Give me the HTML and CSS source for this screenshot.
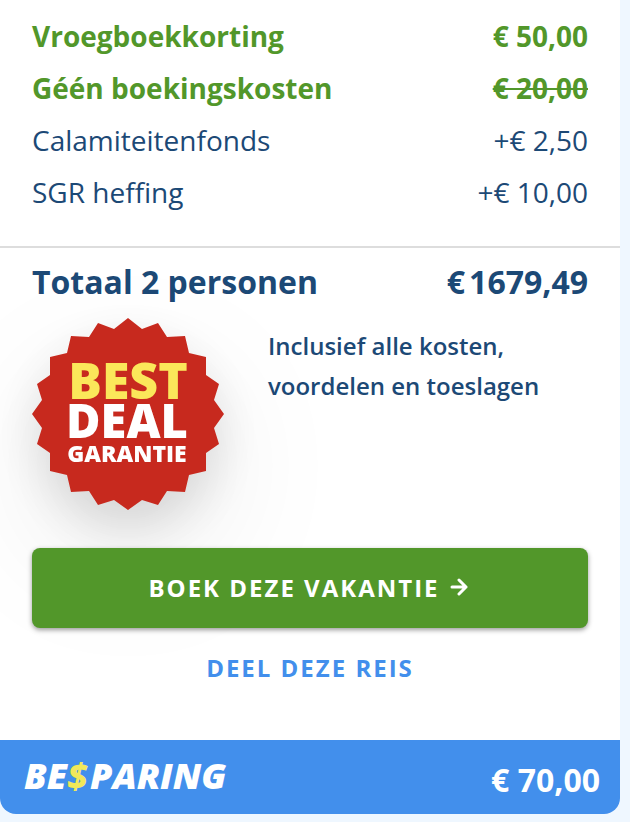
FILE: index.html
```html
<!DOCTYPE html>
<html lang="nl">
<head>
    <meta charset="UTF-8">
    <meta name="viewport" content="width=device-width, initial-scale=1.0">
    <title>Prijsoverzicht</title>
    <link rel="stylesheet" href="styles.css">
</head>
<body>
    <div class="card">
        <table class="costs">
            <tr class="discount">
                <th scope="row">Vroegboekkorting</th>
                <td>€ 50,00</td>
            </tr>
            <tr class="discount">
                <th scope="row">Géén boekingskosten</th>
                <td><s>€ 20,00</s></td>
            </tr>
            <tr>
                <th scope="row">Calamiteitenfonds</th>
                <td>+€ 2,50</td>
            </tr>
            <tr>
                <th scope="row">SGR heffing</th>
                <td>+€ 10,00</td>
            </tr>
        </table>

        <div class="summary">
            <div class="total">
                <span>Totaal 2 personen</span>
                <span class="total-price"><span>€</span><span>1679,49</span></span>
            </div>

            <div class="guarantee">
                <svg class="badge" viewBox="0 0 192 192" role="img" aria-label="Best deal garantie">
                    <polygon fill="#c7291e" points="96,0 110,11 126,5 135,19 153,18 157,35 174,39 174,57 187,66 182,82 192,96 182,110 187,126 174,135 174,153 157,157 153,174 135,173 126,187 110,182 96,192 82,182 66,187 57,173 39,174 35,157 18,153 18,135 5,126 10,110 0,96 10,82 5,66 18,57 18,39 35,35 39,18 57,19 66,5 82,11"/>
                    <text class="badge-best" x="96" y="81">BEST</text>
                    <text class="badge-deal" x="95" y="120">DEAL</text>
                    <text class="badge-small" x="95" y="144">GARANTIE</text>
                </svg>
                <p>Inclusief alle kosten, voordelen en toeslagen</p>
            </div>

            <button type="button" class="book">
                BOEK DEZE VAKANTIE
                <svg class="arrow" viewBox="0 0 18 18" aria-hidden="true">
                    <path d="M2 9H16M9 2L16 9L9 16"/>
                </svg>
            </button>
            <a href="#" class="share">DEEL DEZE REIS</a>
        </div>

        <div class="savings">
            <span class="savings-label">BE<span class="dollar">$</span>PARING</span>
            <span class="savings-price">€ 70,00</span>
        </div>
    </div>
</body>
</html>
```
FILE: styles.css
```css
* {
    box-sizing: border-box;
}
body {
    margin: 0;
    padding-right: 10px;
    background-color: #eff7ff;
    color: #1c4976;
    font-family: "Open Sans", sans-serif;
}
.card {
    overflow: hidden;
    background-color: #fff;
    border-radius: 0 0 16px 16px;
}

/* Cost lines */
.costs {
    width: 100%;
    border-collapse: collapse;
    font-size: 28px;
    line-height: 52px;
}
.costs tr:first-child {
    line-height: 40px;
}
.costs th, .costs td {
    padding: 0 32px;
    font-weight: 400;
    text-align: left;
    vertical-align: bottom;
}
.costs tr:first-child th, .costs tr:first-child td {
    padding-top: 16px;
    padding-bottom: 6px;
}
.costs td {
    text-align: right;
}
.costs .discount th, .costs .discount td {
    color: #52972a;
    font-weight: 700;
}

.summary {
    margin-top: 28px;
    padding: 14px 32px 56px;
    border-top: 2px solid #ddd;
}
.total {
    display: flex;
    justify-content: space-between;
    font-size: 32px;
    font-weight: 700;
    line-height: 40px;
}
.total-price {
    display: flex;
    gap: 4px;
}

/* Best deal badge */
.guarantee {
    display: flex;
    gap: 44px;
    margin: 16px 0 38px;
}
.guarantee p {
    max-width: 290px;
    margin: 8px 0 0;
    font-size: 24px;
    font-weight: 600;
    line-height: 40px;
}
.badge {
    flex: none;
    width: 192px;
    height: 192px;
    filter: drop-shadow(0 20px 24px rgba(0, 0, 0, 0.12)) drop-shadow(0 50px 60px rgba(0, 0, 0, 0.08));
}
.badge text {
    fill: #fff;
    font-weight: 800;
    text-anchor: middle;
}
.badge .badge-best {
    fill: #fbe75a;
    font-size: 50px;
}
.badge-deal {
    font-size: 47px;
}
.badge-small {
    font-size: 23px;
}

.book {
    position: relative;
    display: flex;
    align-items: center;
    justify-content: center;
    gap: 10px;
    width: 100%;
    height: 80px;
    padding: 0 8px 2px 4px;
    border: none;
    border-radius: 8px;
    background-color: #52972a;
    box-shadow: 0 2px 5px rgba(0, 0, 0, 0.4);
    color: #fff;
    font-family: inherit;
    font-size: 24px;
    font-weight: 700;
    letter-spacing: 2px;
    cursor: pointer;
}
.arrow {
    width: 18px;
    height: 18px;
    fill: none;
    stroke: currentColor;
    stroke-width: 3;
    stroke-linecap: round;
    stroke-linejoin: round;
}
.share {
    display: block;
    margin-top: 24px;
    color: #428fec;
    font-size: 24px;
    font-weight: 700;
    letter-spacing: 2px;
    line-height: 32px;
    text-align: center;
    text-decoration: none;
}

.savings {
    position: relative;
    display: flex;
    align-items: center;
    justify-content: space-between;
    height: 74px;
    padding: 0 20px 0 24px;
    background-color: #428fec;
    color: #fff;
}
.savings-label {
    padding-bottom: 4px;
    font-size: 36px;
    font-style: italic;
    font-weight: 800;
}
.savings-price {
    padding-top: 4px;
    font-size: 32px;
    font-weight: 700;
}
.dollar {
    margin-right: 2px;
    color: #f1e85a;
}
```
